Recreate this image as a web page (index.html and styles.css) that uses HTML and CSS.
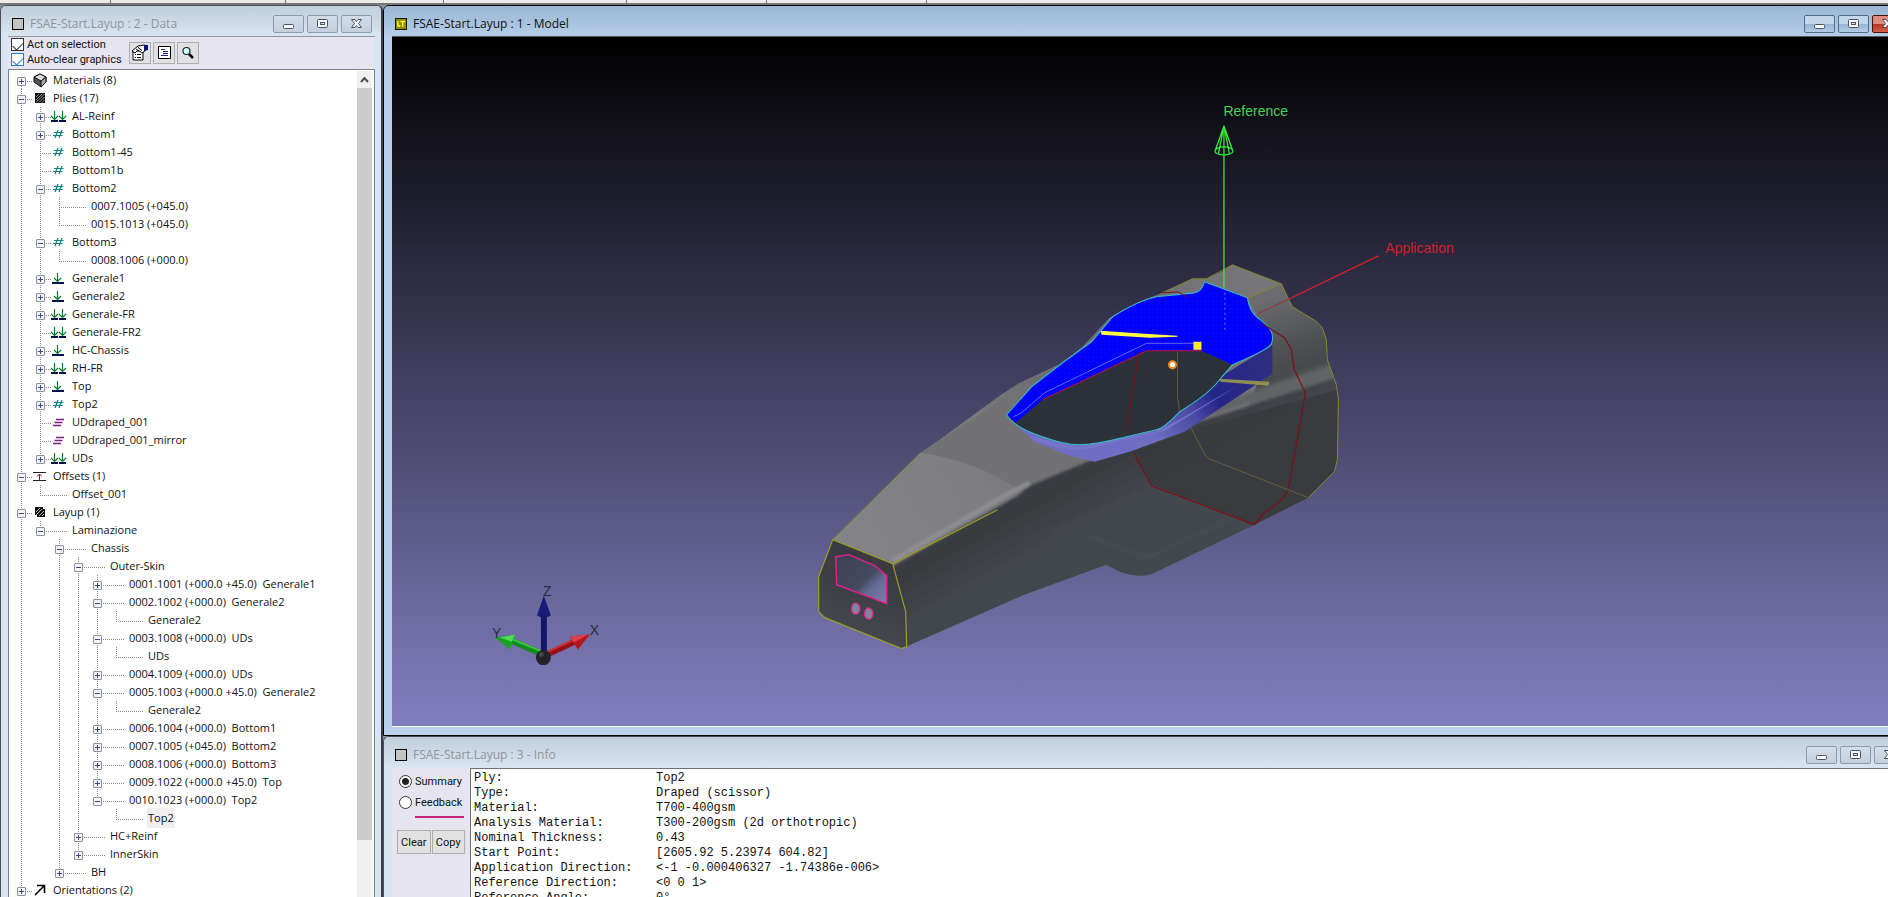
FILE: index.html
```html
<!DOCTYPE html>
<html lang="en">
<head>
<meta charset="utf-8">
<title>FSAE-Start.Layup</title>
<link rel="stylesheet" href="styles.css">
</head>
<body>
<svg class="defs" aria-hidden="true">
  <symbol id="i-cube" viewBox="0 0 16 16"><path d="M2 5 8 2l6 3v5l-5 5-7-5z" fill="#555" stroke="#111"/><path d="M2 5 8 2l6 3-5 4z" fill="#ddd" stroke="#111"/><path d="M9 9v6l5-5V5z" fill="#aaa" stroke="#111"/></symbol>
  <symbol id="i-plies" viewBox="0 0 16 16"><path d="M3 3h10v10H3z" fill="#111"/><path d="M4 7l3-3M4 10l6-6M4 12.500l8.500-8.500M7 12.500l5.500-5.500M10 12.500l2.500-2.500" stroke="#bbb" stroke-width=".8"/></symbol>
  <symbol id="i-layup" viewBox="0 0 16 16"><path d="M3 3h8v2h2v8H5v-2H3z" fill="#111"/><path d="M4 8l4-4M4 11l6-6M7 12l5-5M10 12l2-2" stroke="#bbb"/></symbol>
  <symbol id="i-drop2" viewBox="0 0 16 16"><path d="M0 13h7M8 13h7" stroke="#00104a" stroke-width="2"/><path d="M3.500 3v9M0 8 3.500 11.500 7 8M11.500 3v9M8 8l3.500 3.500L15 8" stroke="#0a7d2c" stroke-width="1.200" fill="none"/></symbol>
  <symbol id="i-drop" viewBox="0 0 16 16"><path d="M1 13h12" stroke="#00104a" stroke-width="2"/><path d="M6.500 3v9M3 8l3.500 3.500L10 8" stroke="#0a7d2c" stroke-width="1.200" fill="none"/></symbol>
  <symbol id="i-hash" viewBox="0 0 16 16"><path d="M3 6.500h9.500M2 9.500h9.500M7 4l-3 8M11 4l-3 8" stroke="#0e8080" stroke-width="1.200"/></symbol>
  <symbol id="i-ud" viewBox="0 0 16 16"><path d="M5 5.500h8M3.500 8.500h8M2 11.500h8" stroke="#7a1d80" stroke-width="1.600"/></symbol>
  <symbol id="i-offset" viewBox="0 0 16 16"><path d="M1 4.500h13M1 12.500h13" stroke="#222" stroke-width="1.200"/><path d="M7.500 12V6M5 8.500 7.500 6 10 8.500" stroke="#7a1830" fill="none"/></symbol>
  <symbol id="i-orient" viewBox="0 0 16 16"><path d="M3 13 12 4M5 3.500h7.500V11" stroke="#000" stroke-width="1.600" fill="none"/></symbol>
  <symbol id="i-min" viewBox="0 0 31 18"><rect x="10.500" y="9.500" width="10" height="4" rx="1" fill="#f8f8f8" stroke="#4d5260"/></symbol>
  <symbol id="i-max" viewBox="0 0 31 18"><rect x="10.500" y="4.500" width="10" height="8" rx="1" fill="#f8f8f8" stroke="#4d5260"/><rect x="13.500" y="7.500" width="4" height="2" fill="#dde" stroke="#4d5260"/></symbol>
  <symbol id="i-close" viewBox="0 0 31 18"><path d="M10.500 4.500h3.500l1.500 2 1.500-2h3.500l-3 4 3 4H17l-1.500-2-1.500 2h-3.500l3-4z" fill="#f8f8f8" stroke="#4d5260"/></symbol>
</svg>

<div class="app">
  <div class="ruler"><i></i><i></i><i></i><i></i><i></i><i></i></div>
  <main class="desk">

    <section class="win win-data">
      <header class="title"><span class="sq"></span><h2>FSAE-Start.Layup : 2 - Data</h2>
        <div class="ctl"><button aria-label="Minimise"><svg><use href="#i-min"/></svg></button><button aria-label="Maximise"><svg><use href="#i-max"/></svg></button><button aria-label="Close"><svg><use href="#i-close"/></svg></button></div>
      </header>
      <div class="tools">
        <div class="checks">
          <label><input type="checkbox" checked>Act on selection</label>
          <label><input type="checkbox" class="hot" checked>Auto-clear graphics</label>
        </div>
        <div class="tbtns">
          <button aria-label="Properties"><svg viewBox="0 0 20 20"><path d="M3 8h10v9H3z" fill="#fff" stroke="#000"/><path d="M5 11.500h1M7 11.500h4M5 14.500h1M7 14.500h4" stroke="#000"/><path d="M2 8 8 3l7-1 1 5-4 3-4-3-3 3z" fill="#fff" stroke="#000"/><path d="M6 6l3 2M8 4.500l4 3" stroke="#000"/><path d="M14 2h4v5l-4 1z" fill="#11117a"/></svg></button>
          <button aria-label="List"><svg viewBox="0 0 20 20"><path d="M4.500 3.500h12v12h-12z" fill="#fff" stroke="#000"/><path d="M7 6.500h4M9 8.500h5M9 10.500h5M7 12.500h7" stroke="#22228a"/></svg></button>
          <button aria-label="Search"><svg viewBox="0 0 20 20"><circle cx="8.500" cy="8" r="3.500" fill="#cff" stroke="#222" stroke-width="1.200"/><path d="m11 11 4 4" stroke="#000" stroke-width="2.500"/></svg></button>
        </div>
      </div>
      <div class="treebox">
        <ul class="tree">
          <li><div class="row ic"><button class="ex" aria-label="Expand"></button><svg><use href="#i-cube"/></svg><span>Materials (8)</span></div></li>
          <li><div class="row ic"><button class="ex open" aria-label="Collapse"></button><svg><use href="#i-plies"/></svg><span>Plies (17)</span></div>
            <ul>
              <li><div class="row ic"><button class="ex" aria-label="Expand"></button><svg><use href="#i-drop2"/></svg><span>AL-Reinf</span></div></li>
              <li><div class="row ic"><button class="ex" aria-label="Expand"></button><svg><use href="#i-hash"/></svg><span>Bottom1</span></div></li>
              <li><div class="row ic leaf"><svg><use href="#i-hash"/></svg><span>Bottom1-45</span></div></li>
              <li><div class="row ic leaf"><svg><use href="#i-hash"/></svg><span>Bottom1b</span></div></li>
              <li><div class="row ic"><button class="ex open" aria-label="Collapse"></button><svg><use href="#i-hash"/></svg><span>Bottom2</span></div>
                <ul>
                  <li><div class="row leaf"><span>0007.1005 (+045.0)</span></div></li>
                  <li><div class="row leaf"><span>0015.1013 (+045.0)</span></div></li>
                </ul></li>
              <li><div class="row ic"><button class="ex open" aria-label="Collapse"></button><svg><use href="#i-hash"/></svg><span>Bottom3</span></div>
                <ul>
                  <li><div class="row leaf"><span>0008.1006 (+000.0)</span></div></li>
                </ul></li>
              <li><div class="row ic"><button class="ex" aria-label="Expand"></button><svg><use href="#i-drop"/></svg><span>Generale1</span></div></li>
              <li><div class="row ic"><button class="ex" aria-label="Expand"></button><svg><use href="#i-drop"/></svg><span>Generale2</span></div></li>
              <li><div class="row ic"><button class="ex" aria-label="Expand"></button><svg><use href="#i-drop2"/></svg><span>Generale-FR</span></div></li>
              <li><div class="row ic leaf"><svg><use href="#i-drop2"/></svg><span>Generale-FR2</span></div></li>
              <li><div class="row ic"><button class="ex" aria-label="Expand"></button><svg><use href="#i-drop"/></svg><span>HC-Chassis</span></div></li>
              <li><div class="row ic"><button class="ex" aria-label="Expand"></button><svg><use href="#i-drop2"/></svg><span>RH-FR</span></div></li>
              <li><div class="row ic"><button class="ex" aria-label="Expand"></button><svg><use href="#i-drop"/></svg><span>Top</span></div></li>
              <li><div class="row ic"><button class="ex" aria-label="Expand"></button><svg><use href="#i-hash"/></svg><span>Top2</span></div></li>
              <li><div class="row ic leaf"><svg><use href="#i-ud"/></svg><span>UDdraped_001</span></div></li>
              <li><div class="row ic leaf"><svg><use href="#i-ud"/></svg><span>UDdraped_001_mirror</span></div></li>
              <li><div class="row ic"><button class="ex" aria-label="Expand"></button><svg><use href="#i-drop2"/></svg><span>UDs</span></div></li>
            </ul></li>
          <li><div class="row ic"><button class="ex open" aria-label="Collapse"></button><svg><use href="#i-offset"/></svg><span>Offsets (1)</span></div>
            <ul>
              <li><div class="row leaf"><span>Offset_001</span></div></li>
            </ul></li>
          <li><div class="row ic"><button class="ex open" aria-label="Collapse"></button><svg><use href="#i-layup"/></svg><span>Layup (1)</span></div>
            <ul>
              <li><div class="row"><button class="ex open" aria-label="Collapse"></button><span>Laminazione</span></div>
                <ul>
                  <li><div class="row"><button class="ex open" aria-label="Collapse"></button><span>Chassis</span></div>
                    <ul>
                      <li><div class="row"><button class="ex open" aria-label="Collapse"></button><span>Outer-Skin</span></div>
                        <ul>
                          <li><div class="row"><button class="ex" aria-label="Expand"></button><span>0001.1001 (+000.0 +45.0)  Generale1</span></div></li>
                          <li><div class="row"><button class="ex open" aria-label="Collapse"></button><span>0002.1002 (+000.0)  Generale2</span></div>
                            <ul><li><div class="row leaf"><span>Generale2</span></div></li></ul></li>
                          <li><div class="row"><button class="ex open" aria-label="Collapse"></button><span>0003.1008 (+000.0)  UDs</span></div>
                            <ul><li><div class="row leaf"><span>UDs</span></div></li></ul></li>
                          <li><div class="row"><button class="ex" aria-label="Expand"></button><span>0004.1009 (+000.0)  UDs</span></div></li>
                          <li><div class="row"><button class="ex open" aria-label="Collapse"></button><span>0005.1003 (+000.0 +45.0)  Generale2</span></div>
                            <ul><li><div class="row leaf"><span>Generale2</span></div></li></ul></li>
                          <li><div class="row"><button class="ex" aria-label="Expand"></button><span>0006.1004 (+000.0)  Bottom1</span></div></li>
                          <li><div class="row"><button class="ex" aria-label="Expand"></button><span>0007.1005 (+045.0)  Bottom2</span></div></li>
                          <li><div class="row"><button class="ex" aria-label="Expand"></button><span>0008.1006 (+000.0)  Bottom3</span></div></li>
                          <li><div class="row"><button class="ex" aria-label="Expand"></button><span>0009.1022 (+000.0 +45.0)  Top</span></div></li>
                          <li><div class="row"><button class="ex open" aria-label="Collapse"></button><span>0010.1023 (+000.0)  Top2</span></div>
                            <ul><li><div class="row leaf"><span class="sel">Top2</span></div></li></ul></li>
                        </ul></li>
                      <li><div class="row"><button class="ex" aria-label="Expand"></button><span>HC+Reinf</span></div></li>
                      <li><div class="row"><button class="ex" aria-label="Expand"></button><span>InnerSkin</span></div></li>
                    </ul></li>
                  <li><div class="row"><button class="ex" aria-label="Expand"></button><span>BH</span></div></li>
                </ul></li>
            </ul></li>
          <li><div class="row ic"><button class="ex" aria-label="Expand"></button><svg><use href="#i-orient"/></svg><span>Orientations (2)</span></div></li>
        </ul>
        <div class="sbar"><button aria-label="Scroll up"><svg viewBox="0 0 15 17"><path d="M4 11l3.500-4 3.500 4" fill="none" stroke="#505050" stroke-width="2"/></svg></button><div class="track"><div class="thumb"></div></div></div>
      </div>
    </section>

    <div class="right">
      <section class="win win-model active">
        <header class="title"><svg class="lt" viewBox="0 0 12 12"><rect width="12" height="12" fill="#1a1a00"/><rect x="1" y="1" width="10" height="10" fill="#8c8a00"/><path d="M3 3v5h2.500M5.500 3.500H10M7.800 3.500V9" stroke="#ff3" fill="none" stroke-width="1.300"/></svg><h2>FSAE-Start.Layup : 1 - Model</h2>
          <div class="ctl"><button aria-label="Minimise"><svg><use href="#i-min"/></svg></button><button aria-label="Maximise"><svg><use href="#i-max"/></svg></button><button class="red" aria-label="Close"><svg><use href="#i-close"/></svg></button></div>
        </header>
        <div class="view">
          <svg viewBox="392 37 1512 688" preserveAspectRatio="xMinYMin meet" role="img" aria-label="Chassis model">
            <defs>
              <linearGradient id="top" gradientUnits="userSpaceOnUse" x1="850" y1="560" x2="1290" y2="290"><stop offset="0" stop-color="#848488"/><stop offset=".3" stop-color="#7e7e81"/><stop offset=".5" stop-color="#6d6d70"/><stop offset="1" stop-color="#77777a"/></linearGradient>
              <linearGradient id="side" gradientUnits="userSpaceOnUse" x1="1020" y1="470" x2="1070" y2="560"><stop offset="0" stop-color="#3a3c40"/><stop offset=".35" stop-color="#383a3e"/><stop offset=".8" stop-color="#43464d"/><stop offset="1" stop-color="#43464d"/></linearGradient>
              <linearGradient id="rear" gradientUnits="userSpaceOnUse" x1="1265" y1="300" x2="1310" y2="430"><stop offset="0" stop-color="#6c6c6e"/><stop offset=".35" stop-color="#505255"/><stop offset=".56" stop-color="#48494c"/><stop offset=".68" stop-color="#626466"/><stop offset=".86" stop-color="#3a3c3e"/><stop offset="1" stop-color="#37393c"/></linearGradient>
              <linearGradient id="rim" gradientUnits="userSpaceOnUse" x1="1150" y1="430" x2="1273" y2="350"><stop offset="0" stop-color="#6f6ec4"/><stop offset=".3" stop-color="#4b4aa4"/><stop offset=".5" stop-color="#25258a"/><stop offset="1" stop-color="#303080"/></linearGradient>
              <linearGradient id="hole" x1="0" y1="0" x2=".4" y2="1"><stop offset="0" stop-color="#2b3038"/><stop offset="1" stop-color="#2d3139"/></linearGradient>
              <linearGradient id="win" x1="0" y1="0" x2="1" y2="1"><stop offset="0" stop-color="#3a3f50"/><stop offset=".55" stop-color="#454a60"/><stop offset=".7" stop-color="#646c94"/><stop offset="1" stop-color="#777fae"/></linearGradient>
              <linearGradient id="nose" x1=".2" y1="1" x2=".5" y2="0"><stop offset="0" stop-color="#4c4d56"/><stop offset=".4" stop-color="#404248"/><stop offset="1" stop-color="#37393e"/></linearGradient>
              <pattern id="mesh" width="4" height="4" patternUnits="userSpaceOnUse"><rect width="4" height="4" fill="#0000fa"/><path d="M1 1h1v1H1z" fill="#1018f0"/></pattern>
              <filter id="soft" x="-20%" y="-20%" width="140%" height="140%"><feGaussianBlur stdDeviation="1.800"/></filter>
              <clipPath id="hull"><path d="M833 540 921 453 940 440 1000 396 1020 383 1063 363 1083 347 1110 318 1140 302 1163 293 1193 279 1207 279 1222 272 1233 265 1282 284 1288 297 1293 307 1316 321 1323 328 1327 340 1328 360 1337 385 1339 400 1338 460 1335 472 1320 487 1309 498 1255 525 1153 574Q1140 579 1120 572L1107 565 1025 595 907 647 893 564z"/></clipPath>
            </defs>
            <path d="M833 540 921 453 940 440 1000 396 1020 383 1063 363 1083 347 1110 318 1140 302 1163 293 1193 279 1207 279 1222 272 1233 265 1282 284 1288 297 1293 307 1316 321 1323 328 1327 340 1328 360 1337 385 1339 400 1338 460 1335 472 1320 487 1309 498 1255 525 1153 574Q1140 579 1120 572L1107 565 1025 595 907 647 893 564z" fill="url(#top)"/>
            <g clip-path="url(#hull)">
              <path d="M921 453 940 440 1010 397 1040 440 1120 450 1018 490Q980 462 921 453z" fill="#727275"/>
              <path d="M1248 298 1282 284 1350 310V400L1240 430 1273 345z" fill="url(#rear)"/>
              <path d="M890 568 1018 496 1030 486 1100 457 1200 422 1345 376V520L1140 600 900 660z" fill="url(#side)" filter="url(#soft)"/>
              <path d="M893 561 1012 492 1030 483" stroke="#909094" stroke-width="4" fill="none" filter="url(#soft)"/>
              <path d="M1120 446 1200 414 1340 368" stroke="#626466" stroke-width="9" fill="none" filter="url(#soft)"/>
              <path d="M1134 453 1200 428 1345 388V470L1309 498 1255 525 1152 485z" fill="#37393c" opacity=".85"/>
              <path d="M1045 532 1152 485 1255 525 1145 577 1107 565z" fill="#454950" opacity=".7" filter="url(#soft)"/>
              <path d="M1090 537 1148 558 1230 520" stroke="#4b4f56" stroke-width="1.500" fill="none" filter="url(#soft)"/>
            </g>
            <path d="M833 540 819 577V612L825 618 902 649 907 647 906 612 893 564z" fill="url(#nose)"/>
            <path d="M836 557 849 555 875 566 887 576V604L837 585z" fill="url(#win)" stroke="#e0208c" stroke-width="1.500"/>
            <ellipse cx="856" cy="609" rx="4" ry="5.500" fill="#8085a0" stroke="#d83090" stroke-width="1.500"/>
            <ellipse cx="869" cy="614" rx="4" ry="5.500" fill="#8085a0" stroke="#d83090" stroke-width="1.500"/>
            <path d="M833 540 819 577V612L825 618 902 649 907 647 906 612 893 564zM893 564 998 510" fill="none" stroke="#9c9c28" stroke-width="1.200"/>
            <path d="M833 540 921 453M1163 293 1193 279 1207 279 1233 265 1282 284 1288 297 1293 307 1316 321 1323 328 1327 340 1328 360 1337 385 1339 400 1338 460 1335 472 1320 487 1309 498M1248 298 1282 284" fill="none" stroke="#85852a"/>
            <path d="M1013 422 1035 442 1070 456 1095 462 1130 452 1185 432 1273 374V345L1200 390 1120 435 1060 440z" fill="url(#rim)"/>
            <path d="M1030 437Q1060 453 1085 450L1165 431 1240 385 1180 420 1157 432 1080 447z" fill="#7675cc"/>
            <path d="M1007 415 1032 387 1063 363 1092 342 1113 317Q1138 301 1157 297L1195 293Q1202 292 1205 282L1248 298Q1250 310 1256 316L1267 325Q1276 334 1272 344 1269 350 1233 365L1220 380Q1210 394 1180 412 1165 428 1157 430L1127 437Q1095 445 1080 445T1043 437Q1015 428 1007 415z" fill="url(#hole)"/>
            <path d="M1007 415 1032 387 1063 363 1092 342 1113 317Q1138 301 1157 297L1195 293Q1202 292 1205 282L1248 298Q1250 310 1256 316L1267 325Q1276 334 1272 344 1269 350 1233 365L1202 351H1147L1043 400 1016 423z" fill="url(#mesh)"/>
            <path d="M1043 400 1147 351H1202" stroke="#c01040" fill="none"/>
            <path d="M1014 417 1022 413 1045 393 1147 343.500H1196" stroke="#8080e8" stroke-width=".8" fill="none"/>
            <path d="M1007 415 1032 387 1063 363 1092 342 1113 317Q1138 301 1157 297L1195 293Q1202 292 1205 282L1248 298Q1250 310 1256 316L1267 325Q1276 334 1272 344 1269 350 1233 365L1220 380Q1210 394 1180 412 1165 428 1157 430L1127 437Q1095 445 1080 445T1043 437Q1015 428 1007 415z" fill="none" stroke="#38b8c8" stroke-width="1.100"/>
            <path d="M1101 331 1145 334 1178 336V337L1150 338 1102 335z" fill="#ffff3c"/>
            <path d="M1220 379 1270 382 1269 386 1221 382z" fill="#8f8e50"/>
            <path d="M1140 352 1133 390 1127 433M1263 324 1285 338 1292 350 1295 370 1306 393 1289 490Q1284 501 1266 512L1255 525 1152 486 1134 453" fill="none" stroke="#7c1018" stroke-width="1.200"/>
            <path d="M1178 352V398L1180 410M1190 425 1207 458 1309 498" fill="none" stroke="#5f6038"/>
            <path d="M1163 293 1178 292 1188 297" fill="none" stroke="#7c1018"/>
            <rect x="1194" y="342" width="8" height="8" fill="#ffe92e"/>
            <circle cx="1173" cy="365" r="3.500" fill="#fff" stroke="#f08a28" stroke-width="2"/>
            <path d="M1379 256 1288 300" stroke="#d8202c" stroke-width="1.200"/><path d="M1288 300 1258 314" stroke="#9c3038"/>
            <path d="M1224.500 126V288" stroke="#36e83c" stroke-width="1.300"/><path d="M1225.500 288v44" stroke="#5f80ff" stroke-dasharray="2 3"/>
            <g fill="none" stroke="#36e83c" stroke-width="1.300"><ellipse cx="1224.500" cy="151" rx="9" ry="4"/><path d="M1224.500 126 1216 150M1224.500 126 1233 150M1224.500 126 1219 154M1224.500 126 1230 154"/></g>
            <text x="1224" y="116" class="lbl" fill="#4fce58">Reference</text>
            <text x="1386" y="253" class="lbl" fill="#d0222c">Application</text>
            <path d="M541 616h6v40h-6z" fill="#15156a"/><path d="M544 596l7 20q-7 4-14 0z" fill="#1a1a78"/>
            <path d="M543 655 511 641" stroke="#138a1c" stroke-width="6"/><path d="M511 639 542 652" stroke="#35c83c" stroke-width="2"/><path d="M495 638l20-3-5 15z" fill="#17a321"/><path d="M500 638l15-3-3 7z" fill="#4fdc55"/>
            <path d="M545 656 575 642" stroke="#961018" stroke-width="6"/><path d="M546 653 574 640" stroke="#d03038" stroke-width="2"/><path d="M590 635l-20 2 8 13z" fill="#b5161e"/><path d="M588 635l-18 2 4 6z" fill="#e04048"/>
            <circle cx="543.500" cy="658" r="7.500" fill="#232329"/><circle cx="541.500" cy="655" r="2.500" fill="#44444c"/>
            <text x="543" y="596" class="lbl" fill="#2a2a40">Z</text><text x="590" y="635" class="lbl" fill="#2a2a40">X</text><text x="492" y="638" class="lbl" fill="#2a2a40">Y</text>
          </svg>
        </div>
      </section>

      <section class="win win-info">
        <header class="title"><span class="sq"></span><h2>FSAE-Start.Layup : 3 - Info</h2>
          <div class="ctl"><button aria-label="Minimise"><svg><use href="#i-min"/></svg></button><button aria-label="Maximise"><svg><use href="#i-max"/></svg></button><button aria-label="Close"><svg><use href="#i-close"/></svg></button></div>
        </header>
        <div class="info">
          <div class="side">
            <label><input type="radio" name="mode" checked>Summary</label>
            <label><input type="radio" name="mode">Feedback</label>
            <hr>
            <div class="acts"><button>Clear</button><button>Copy</button></div>
          </div>
          <dl>
            <dt>Ply:</dt><dd>Top2</dd>
            <dt>Type:</dt><dd>Draped (scissor)</dd>
            <dt>Material:</dt><dd>T700-400gsm</dd>
            <dt>Analysis Material:</dt><dd>T300-200gsm (2d orthotropic)</dd>
            <dt>Nominal Thickness:</dt><dd>0.43</dd>
            <dt>Start Point:</dt><dd>[2605.92 5.23974 604.82]</dd>
            <dt>Application Direction:</dt><dd>&lt;-1 -0.000406327 -1.74386e-006&gt;</dd>
            <dt>Reference Direction:</dt><dd>&lt;0 0 1&gt;</dd>
            <dt>Reference Angle:</dt><dd>0°</dd>
          </dl>
        </div>
      </section>
    </div>
  </main>
</div>
</body>
</html>
```
FILE: styles.css
```css
* { box-sizing: border-box; }
body { margin: 0; font: 12px/18px "Open Sans", "Noto Sans", sans-serif; color: #111; background: #8f8f93; }
button { font: inherit; padding: 0; margin: 0; color: inherit; }
ul, dl, dd, h2 { margin: 0; padding: 0; list-style: none; }
svg { display: block; }
.defs { position: absolute; width: 0; height: 0; }

.app { height: 100vh; display: flex; flex-direction: column; overflow: hidden; }
.ruler { height: 5px; display: grid; grid-template-columns: 111px 175px 158px 183px 140px 160px; background: #edebe8; border-bottom: 2px solid #77777b; flex: none; }
.ruler i { border-right: 1px solid #77777b; }
.desk { flex: 1; min-height: 0; display: grid; grid-template-columns: 383px minmax(0, 1fr); }
.right { display: grid; grid-template-rows: minmax(0, 1fr) 161px; margin-right: -24px; min-width: 0; min-height: 0; }

.win { display: flex; flex-direction: column; min-height: 0; min-width: 0; padding: 0 8px; background: #d7e4f1; border: 1px solid #4c4f55; border-radius: 6px 6px 0 0; overflow: hidden; }
.win-data { padding: 0 6px 0 7px; border-right: 2px solid #3c3e44; border-bottom: 0; }
.win-info { border-bottom: 0; }
.active { background: #b9d1ea; border: 1px solid #000; padding-bottom: 8px; }
.title { flex: none; height: 30px; margin: 0 -8px; padding: 5px 8px 0 11px; display: flex; align-items: center; gap: 6px; background: linear-gradient(#c0cedb, #d9e5f0); color: #8e959c; }
.win-info .title { height: 31px; padding-right: 6px; }
.win-data .title { margin: 0 -7px; padding-right: 10px; }
.active .title { background: linear-gradient(#9ab5d3, #b5cde8); color: #111; }
.title h2 { flex: 1; font: inherit; }
.sq { width: 12px; height: 12px; background: #c4c4c4; border: 1px solid #000; }
.lt { width: 12px; height: 12px; }
.ctl { display: flex; gap: 3px; }
.ctl button { width: 31px; height: 18px; border: 1px solid #8c9bb2; border-radius: 2px; background: linear-gradient(#d3dde9, #c3cfde); }
.ctl svg { width: 31px; height: 18px; margin: -1px; }
.active .ctl button { border-color: #546b8a; background: linear-gradient(#c2d6ec 50%, #98b4d4 50%, #b4cde8); }
.active .ctl .red { border-color: #4b1410; background: linear-gradient(#dd8d80 50%, #b83222 50%, #d0604a); }

.tools { flex: none; height: 33px; padding: 0 3px; display: flex; gap: 10px; background: #e5e4ef; border-top: 1px solid #8e96a0; font: 11px/15px Roboto, sans-serif; }
.checks label { display: flex; align-items: center; gap: 3px; height: 15px; }
.checks { width: 108px; white-space: nowrap; }
.checks input { appearance: none; flex: none; width: 13px; height: 13px; margin: 0; background: #fff; border: 1px solid #333; display: grid; place-items: center; }
.checks input::after { content: ""; width: 9px; height: 5px; border: solid #333; border-width: 0 0 1px 1px; transform: rotate(-45deg); }
.checks .hot { border-color: #2a80c8; }
.checks .hot::after { border-color: #2a80c8; }
.tbtns { display: flex; gap: 2px; padding-top: 5px; }
.tbtns button { width: 22px; height: 22px; border: 1px solid #adadb2; background: #e1e1e3; }
.tbtns svg { width: 20px; height: 20px; }

.treebox { flex: 1; min-height: 0; display: flex; justify-content: space-between; background: #fff; border: 1px solid #7c828c; border-bottom: 0; padding: 1px 2px 0 8px; overflow: hidden; font-size: 11px; }
.tree ul { padding-left: 19px; }
.tree li { background: repeating-linear-gradient(#8a8a8a 0 1px, transparent 1px 2px) 4px 0 / 1px 100% no-repeat; }
.tree li:last-child { background-size: 1px 11px; }
.tree > li:first-child { background-position: 4px 11px; }
.row { display: flex; align-items: center; height: 18px; white-space: pre; background: repeating-linear-gradient(90deg, #8a8a8a 0 1px, transparent 1px 2px) 4px 10px / 27px 1px no-repeat; }
.row.ic { background-size: 11px 1px; }
.row svg { width: 16px; height: 16px; margin-left: 6px; }
.row span { margin-left: 5px; }
.row > span:nth-child(2) { margin-left: 27px; }
.row.leaf svg { margin-left: 15px; }
.row.leaf > span:first-child { margin-left: 36px; }
.row.leaf.ic > span { margin-left: 5px; }
.row .sel { background: #f0eef0; box-shadow: 0 0 0 1px #f0eef0; }
.ex { width: 9px; height: 9px; margin-top: 3px; border: 1px solid #8b93a3; border-radius: 1px; background: linear-gradient(#3b4a86, #3b4a86) center / 5px 1px no-repeat, linear-gradient(#3b4a86, #3b4a86) center / 1px 5px no-repeat, #f4f4f6; }
.ex.open { background: linear-gradient(#3b4a86, #3b4a86) center / 5px 1px no-repeat, #f4f4f6; }
.sbar { width: 15px; display: flex; flex-direction: column; background: #f0f0f0; }
.sbar button { height: 17px; border: 0; background: #f0f0f0; }
.sbar svg { width: 15px; height: 17px; }
.track { flex: 1; }
.thumb { height: 93%; background: #cdcdcd; }

.view { flex: 1; min-height: 0; background: linear-gradient(#000, #827fc0); border-top: 1px solid #555; border-bottom: 1px solid #f4f4ff; }
.view svg { width: 100%; height: 100%; }
.lbl { font: 14px "Liberation Sans", Arial, sans-serif; }

.info { flex: 1; min-height: 0; display: grid; grid-template-columns: 78px minmax(0, 1fr); background: #e5e4ef; }
.side { padding: 6px 6px 0 7px; font: 11px/15px Roboto, sans-serif; }
.side label { display: flex; align-items: center; gap: 3px; height: 15px; margin-bottom: 6px; }
.side input { appearance: none; flex: none; width: 13px; height: 13px; margin: 0; border: 1px solid #333; border-radius: 50%; background: #fff; }
.side input:checked { background: radial-gradient(circle, #222 0 3px, #fff 4px); }
.side hr { height: 2px; margin: 0 0 0 16px; border: 0; background: #c8247c; }
.acts { display: grid; grid-template-columns: 1fr 1fr; gap: 1px; margin: 12px -1px 0 -2px; }
.acts button { height: 24px; border: 1px solid #adadad; background: #e1e1e1; }
.info dl { padding: 2px 3px; display: grid; grid-template-columns: 182px minmax(0, 1fr); grid-auto-rows: 15px; background: #fff; border: solid #6c7078; border-width: 1px 0 0 1px; font: 12px/15px "Liberation Mono", "Courier New", monospace; white-space: pre; overflow: hidden; }
```
